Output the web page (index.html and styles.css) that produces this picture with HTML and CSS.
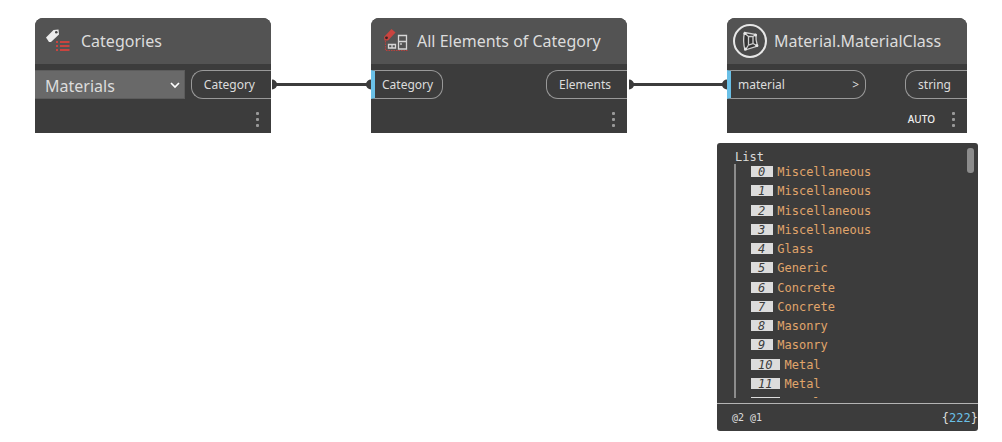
FILE: index.html
```html
<!DOCTYPE html>
<html lang="en">
<head>
<meta charset="utf-8">
<title>Node graph</title>
<link rel="stylesheet" href="styles.css">
</head>
<body>
<main class="canvas">
  <svg class="wires" width="470" height="12" viewBox="0 0 470 12" aria-hidden="true">
    <g fill="#3c3c3c">
      <path d="M5 4H104V7H5zM362 4H460V7H362z"/>
      <path d="M5 0.500A5 5 0 0 1 5 10.500zM104 0.500A5 5 0 0 0 104 10.500zM362 0.500A5 5 0 0 1 362 10.500zM460 0.500A5 5 0 0 0 460 10.500z"/>
    </g>
  </svg>

  <article class="node node-categories">
    <header class="node-head">
      <svg class="icon" width="32" height="32" viewBox="0 0 32 32" aria-hidden="true">
        <path fill="#ececec" d="M4 12.500L11.500 5L16.500 4.500L17 9.500L9 17L7 17z"/>
        <circle cx="14.300" cy="7.200" r="1.300" fill="#444"/>
        <path fill="#c9443f" d="M14 16h2v2h-2zM18 16h9.500v2H18zM14 20h2v2h-2zM18 20h9.500v2H18zM14 24h2v2h-2zM18 24h9.500v2H18z"/>
      </svg>
      <h2 class="node-title">Categories</h2>
    </header>
    <div class="ports">
      <div class="picker">
        <select class="picker-select" aria-label="Category"><option>Materials</option></select>
        <svg class="picker-arrow" width="10" height="8" viewBox="0 0 10 8" aria-hidden="true"><path d="M1 2L5 6L9 2" fill="none" stroke="#fff" stroke-width="1.700"/></svg>
      </div>
      <button class="port port-out" type="button">Category</button>
    </div>
    <footer class="node-foot">
      <button class="more" type="button" aria-label="More options"><i class="dot"></i><i class="dot"></i><i class="dot"></i></button>
    </footer>
  </article>

  <article class="node node-elements">
    <header class="node-head">
      <svg class="icon" width="32" height="32" viewBox="0 0 32 32" aria-hidden="true">
        <path fill="#c9443f" d="M6 12L13.500 4L17.500 7.500L10 15.500L6.500 15.500z"/>
        <circle cx="8.500" cy="12.800" r="1.400" fill="#3a2222"/>
        <path d="M7.500 16V25.500H30" fill="none" stroke="#b8403c" stroke-width="1.200" stroke-dasharray="1.500 1"/>
        <path d="M10.500 19.500h7v3.500h-7zM14 19.500v3.500M20.500 10.500h8v13.500h-8zM20.500 16.500h8M23 18v2" fill="none" stroke="#d6d6d6" stroke-width="1.300"/>
      </svg>
      <h2 class="node-title">All Elements of Category</h2>
    </header>
    <div class="ports">
      <button class="port port-in" type="button">Category</button>
      <button class="port port-out" type="button">Elements</button>
    </div>
    <footer class="node-foot">
      <button class="more" type="button" aria-label="More options"><i class="dot"></i><i class="dot"></i><i class="dot"></i></button>
    </footer>
  </article>

  <article class="node node-material">
    <header class="node-head">
      <svg class="icon icon-round" width="34" height="34" viewBox="0 0 34 34" aria-hidden="true">
        <circle cx="17" cy="17" r="16" fill="#4a4a4a" stroke="#e6e6e6" stroke-width="2"/>
        <g fill="none" stroke="#cfcfcf" stroke-width="1.300">
          <path fill="#333" d="M11.500 8.500L23 10.500Q22.500 16 24.500 22L12 26Q9.500 17 11.500 8.500z"/>
          <path d="M15.500 12.500H20V19.500L15.500 21zM15.500 21L13 25M20 19.500L23.500 21.500M15.500 12.500L12 9.500M20 12.500L22.500 10.500"/>
        </g>
        <g fill="#e6e6e6"><circle cx="12" cy="9.500" r="1.600"/><circle cx="22.500" cy="11" r="1.500"/><circle cx="12.500" cy="25" r="1.600"/><circle cx="23.800" cy="21.500" r="1.500"/></g>
      </svg>
      <h2 class="node-title">Material.MaterialClass</h2>
    </header>
    <div class="ports">
      <button class="port port-in port-wide" type="button"><span>material</span><span>&gt;</span></button>
      <button class="port port-out" type="button">string</button>
    </div>
    <footer class="node-foot">
      <span class="lacing">AUTO</span>
      <button class="more" type="button" aria-label="More options"><i class="dot"></i><i class="dot"></i><i class="dot"></i></button>
    </footer>
  </article>

  <section class="preview" aria-label="Output preview">
    <div class="preview-body">
      <div class="preview-label">List</div>
      <div class="list-view">
        <ul class="list">
          <li class="row"><em class="index">0</em><span class="value">Miscellaneous</span></li>
          <li class="row"><em class="index">1</em><span class="value">Miscellaneous</span></li>
          <li class="row"><em class="index">2</em><span class="value">Miscellaneous</span></li>
          <li class="row"><em class="index">3</em><span class="value">Miscellaneous</span></li>
          <li class="row"><em class="index">4</em><span class="value">Glass</span></li>
          <li class="row"><em class="index">5</em><span class="value">Generic</span></li>
          <li class="row"><em class="index">6</em><span class="value">Concrete</span></li>
          <li class="row"><em class="index">7</em><span class="value">Concrete</span></li>
          <li class="row"><em class="index">8</em><span class="value">Masonry</span></li>
          <li class="row"><em class="index">9</em><span class="value">Masonry</span></li>
          <li class="row"><em class="index">10</em><span class="value">Metal</span></li>
          <li class="row"><em class="index">11</em><span class="value">Metal</span></li>
          <li class="row"><em class="index">12</em><span class="value">Metal</span></li>
        </ul>
      </div>
      <div class="scroll-thumb"></div>
    </div>
    <footer class="preview-foot">
      <span class="levels">@2 @1</span>
      <span class="count">{<span class="count-value">222</span>}</span>
    </footer>
  </section>
</main>
</body>
</html>
```

FILE: styles.css
```css
* {
  box-sizing: border-box;
}

body {
  margin: 0;
  background: #fff;
  font-family: "Noto Sans", sans-serif;
  color: #dcdcdc;
}

button {
  font: inherit;
  color: inherit;
  background: none;
  border: 0;
  padding: 0;
}

.canvas {
  position: relative;
  min-height: 100vh;
  overflow: hidden;
}

/* Nodes are placed freely on the canvas */
.wires {
  position: absolute;
  left: 267px;
  top: 79px;
}

.node {
  position: absolute;
  top: 18px;
  background: #3c3c3c;
  border-radius: 8px 8px 0 0;
}

.node-categories {
  left: 35px;
  width: 236px;
}

.node-elements {
  left: 371px;
  width: 256px;
}

.node-material {
  left: 727px;
  width: 240px;
}

.node-head {
  display: flex;
  align-items: center;
  gap: 7px;
  height: 46px;
  padding: 0 7px;
  background: #535353;
  border-radius: 8px 8px 0 0;
}

.node-title {
  margin: 0;
  font-size: 16px;
  font-weight: 400;
  line-height: 22px;
  white-space: nowrap;
}

.icon {
  flex: none;
}

.icon-round {
  margin-left: -1px;
}

.ports {
  display: flex;
  justify-content: space-between;
  padding-top: 6px;
}

.picker {
  position: relative;
  width: 150px;
}

.picker-select {
  appearance: none;
  width: 100%;
  height: 29px;
  padding: 2px 24px 0 10px;
  border: 1px solid #5c5c5c;
  border-left: 0;
  border-radius: 0;
  background: #696969;
  color: #dcdcdc;
  font-family: inherit;
  font-size: 16px;
}

.picker-arrow {
  position: absolute;
  right: 5px;
  top: 11px;
}

.port {
  display: flex;
  align-items: center;
  height: 29px;
  border: 1px solid #999;
  font-size: 12px;
}

.port-out {
  padding: 0 16px 0 12px;
  border-right: 0;
  border-radius: 12px 0 0 12px;
}

.port-in {
  padding: 0 9px 0 7px;
  border-left: 4px solid #6ac0e7;
  border-radius: 0 12px 12px 0;
}

.port-wide {
  justify-content: space-between;
  width: 139px;
  padding-right: 6px;
}

.node-foot {
  display: flex;
  justify-content: flex-end;
  align-items: center;
  gap: 17px;
  height: 34px;
  padding: 6px 12px 0 0;
}

.lacing {
  font-size: 10px;
  font-weight: 500;
  color: #eee;
}

.more {
  display: grid;
  gap: 3px;
}

.dot {
  width: 3px;
  height: 3px;
  border-radius: 1px;
  background: #999;
}

.preview {
  position: absolute;
  left: 717px;
  top: 143px;
  width: 261px;
  background: #3c3c3c;
  border-radius: 3px;
  font-family: "DejaVu Sans Mono", monospace;
  font-size: 12px;
}

.preview-body {
  position: relative;
  padding: 8px 17px 5px;
}

.preview-label {
  padding-left: 1px;
  line-height: 13px;
}

.list-view {
  height: 234px;
  overflow: hidden;
  border-left: 2px solid #8c8c8c;
}

.list {
  display: flex;
  flex-direction: column;
  justify-content: space-between;
  height: 247px;
  margin: 0;
  padding: 0 0 0 15px;
  list-style: none;
  color: #e0a56b;
}

.row {
  display: flex;
  align-items: flex-start;
  gap: 4px;
}

.index {
  height: 11px;
  margin-top: 2px;
  padding: 0 8px 0 7px;
  background: #dcdcdc;
  color: #3c3c3c;
  line-height: 12px;
}

.value {
  padding-top: 1px;
  line-height: 15px;
}

.scroll-thumb {
  position: absolute;
  top: 5px;
  right: 4px;
  width: 7px;
  height: 25px;
  border-radius: 3px;
  background: #8c8c8c;
}

.preview-foot {
  display: flex;
  align-items: center;
  justify-content: space-between;
  height: 28px;
  padding-left: 15px;
  border-top: 1px solid #b4b4b4;
}

.levels {
  font-size: 10px;
}

.count-value {
  color: #6ac0e7;
}
```
